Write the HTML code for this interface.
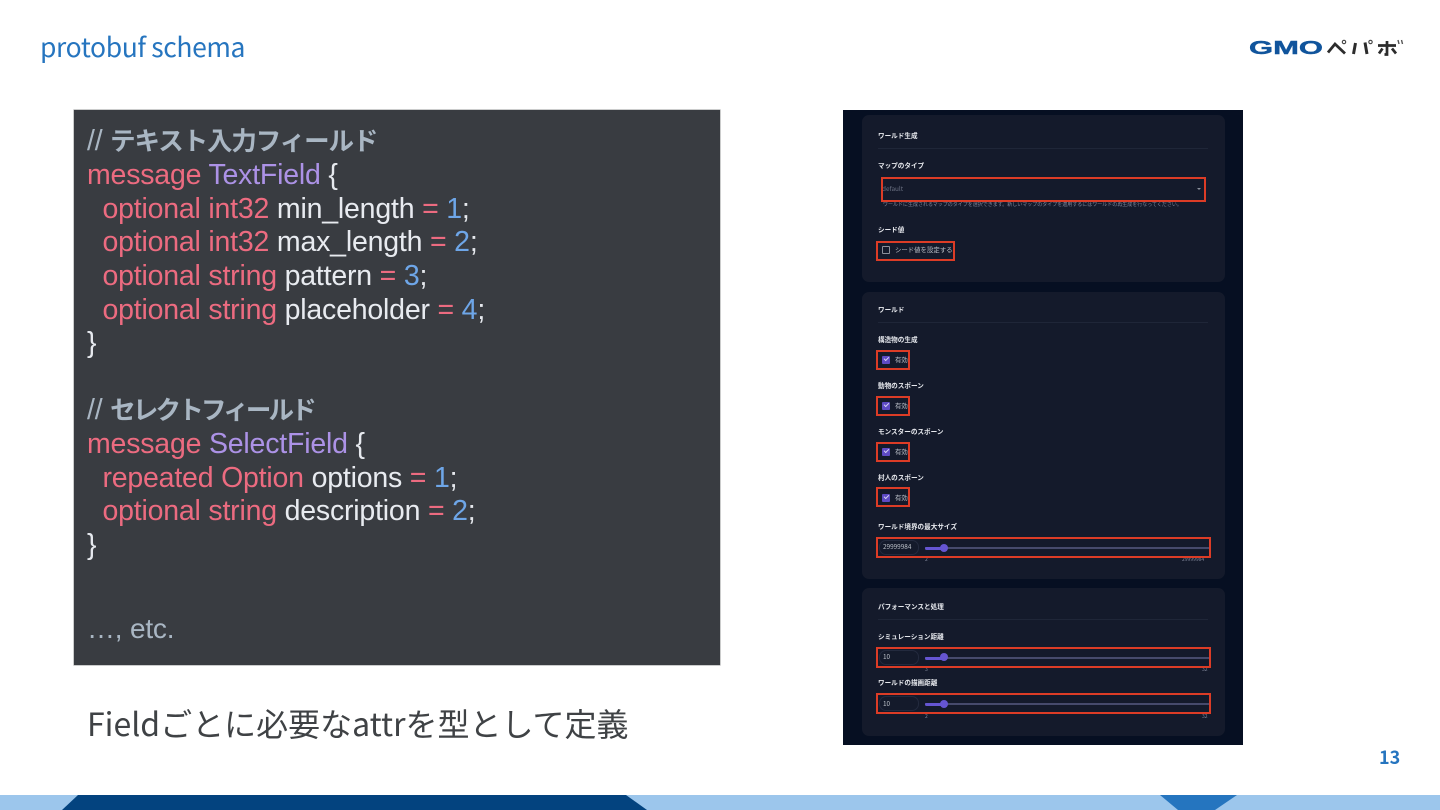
<!DOCTYPE html>
<html lang="ja"><head><meta charset="utf-8"><title>protobuf schema</title>
<style>
html,body{margin:0;padding:0;background:#fff}
body{width:1440px;height:810px;position:relative;overflow:hidden;font-family:"Liberation Sans","Noto Sans CJK JP",sans-serif}
.a{position:absolute}
.t{position:absolute;white-space:nowrap}
.jp{font-family:"Noto Sans CJK JP",sans-serif}
#code{left:74px;top:110px;width:646px;height:555px;background:#393c41;box-shadow:0 0 0 .6px #a8a9ab}
.l{position:absolute;left:13px;white-space:pre;font-size:28.5px;line-height:34px;height:34px;color:#e6e9ee;letter-spacing:-.2px}
.r{color:#ec6b80}.p{color:#ac92e6}.b{color:#6ea6e8}.w{color:#e8ebf0}
.c{color:#a9b6c3}.c b{font-weight:700;font-family:"Noto Sans CJK JP",sans-serif;font-size:25.5px;letter-spacing:-1.1px}
#shot{left:843px;top:110px;width:400px;height:635px;background:#060f22;overflow:hidden}
#in{position:absolute;left:0;top:0;width:400px;height:635px;filter:blur(.3px)}
.card{position:absolute;left:19px;width:363px;background:#141a2b;border-radius:7px}
.hr{position:absolute;left:35px;width:330px;height:1px;background:#1f2638}
.lb{position:absolute;left:35px;margin-top:-1px;font:700 6.6px/10px "Noto Sans CJK JP",sans-serif;color:#e6e8ed;white-space:nowrap}
.sm{position:absolute;font:400 6.4px/10px "Noto Sans CJK JP",sans-serif;color:#bcc0c8;white-space:nowrap}
.tiny{position:absolute;font:400 5px/8px "Noto Sans CJK JP",sans-serif;color:#80869a;white-space:nowrap}
.red{position:absolute;border:2px solid #dc3c26;box-sizing:border-box}
.cb{position:absolute;left:39px;width:8px;height:8px;background:#5d4ac4;border-radius:1px}
.cb:after{content:"";position:absolute;left:2px;top:1.2px;width:3.5px;height:2px;border-left:1px solid #d6d2f4;border-bottom:1px solid #d6d2f4;transform:rotate(-45deg)}
.tr{position:absolute;left:82px;width:284px;height:2px;background:#464a6c}
.fi{position:absolute;left:82px;width:19px;height:3px;margin-top:-.5px;background:#6555d2;border-radius:2px}
.th{position:absolute;left:97px;width:8px;height:8px;border-radius:50%;background:#6555d2}
.inp{position:absolute;left:36px;width:40px;height:15px;border:1px solid #232a3e;border-radius:7px;box-sizing:border-box}
</style></head><body>

<div class="t jp" style="left:40px;top:27px;font-size:26.5px;line-height:38px;color:#2675bf;letter-spacing:-.38px">protobuf schema</div>

<svg class="a" style="left:1245px;top:34px" width="162" height="26" viewBox="0 0 162 26">
<text x="4" y="20" font-family="Liberation Sans" font-weight="700" font-size="18.5" fill="#10549c" stroke="#10549c" stroke-width=".4" textLength="74" lengthAdjust="spacingAndGlyphs">GMO</text>
<path d="M83 18.5 L90 10 L100 19.5" fill="none" stroke="#2c2c2c" stroke-width="2.8"/>
<circle cx="99" cy="8" r="1.7" fill="none" stroke="#444" stroke-width="1.1"/>
<path d="M110.5 9 L108.5 20 M120 8.5 L122 20" fill="none" stroke="#2c2c2c" stroke-width="3"/>
<circle cx="125.5" cy="8" r="1.7" fill="none" stroke="#444" stroke-width="1.1"/>
<path d="M133 11.5 H151 M142 7 V20.5 L139.5 20.5 M137.5 14.5 L134 19.5 M147 14.5 L151 19.5" fill="none" stroke="#2c2c2c" stroke-width="2.7"/>
<path d="M153 6 L154 10 M156.5 6 L157.5 10" fill="none" stroke="#555" stroke-width="1.4"/>
</svg>

<div id="code" class="a">
<div class="l c" style="top:13px">// <b>テキスト入力フィールド</b></div>
<div class="l" style="top:48px"><span class="r">message</span> <span class="p">TextField</span> {</div>
<div class="l" style="top:82px">  <span class="r">optional int32</span> <span class="w">min_length</span> <span class="r">=</span> <span class="b">1</span>;</div>
<div class="l" style="top:115px">  <span class="r">optional int32</span> <span class="w">max_length</span> <span class="r">=</span> <span class="b">2</span>;</div>
<div class="l" style="top:149px">  <span class="r">optional string</span> <span class="w">pattern</span> <span class="r">=</span> <span class="b">3</span>;</div>
<div class="l" style="top:183px">  <span class="r">optional string</span> <span class="w">placeholder</span> <span class="r">=</span> <span class="b">4</span>;</div>
<div class="l" style="top:216px">}</div>
<div class="l c" style="top:282px">// <b style="letter-spacing:-2.8px">セレクトフィールド</b></div>
<div class="l" style="top:317px"><span class="r">message</span> <span class="p">SelectField</span> {</div>
<div class="l" style="top:351px">  <span class="r">repeated Option</span> <span class="w">options</span> <span class="r">=</span> <span class="b">1</span>;</div>
<div class="l" style="top:384px">  <span class="r">optional string</span> <span class="w">description</span> <span class="r">=</span> <span class="b">2</span>;</div>
<div class="l" style="top:418px">}</div>
<div class="l c" style="top:502px;font-size:28px">…, etc.</div>
</div>

<div class="t jp" style="left:87px;top:699px;font-size:32px;line-height:48px;color:#3f4245">Fieldごとに必要なattrを型として定義</div>

<div id="shot" class="a"><div id="in">
<div class="card" style="top:5px;height:167px"></div>
<div class="card" style="top:182px;height:287px"></div>
<div class="card" style="top:478px;height:148px"></div>

<div class="lb" style="top:21px">ワールド生成</div>
<div class="hr" style="top:38px"></div>
<div class="lb" style="top:51px">マップのタイプ</div>
<div class="sm" style="left:39px;top:74px;color:#6a7082">default</div>
<div class="t" style="left:354px;top:78px;width:0;height:0;border:2px solid transparent;border-top:2px solid #8a8f9c"></div>
<div class="tiny" style="left:40px;top:91px">ワールドに生成されるマップのタイプを選択できます。新しいマップのタイプを適用するにはワールドの再生成を行なってください。</div>
<div class="lb" style="top:115px">シード値</div>
<div class="a" style="left:39px;top:136px;width:8px;height:8px;border:1px solid #8b8f9a;box-sizing:border-box;border-radius:1px"></div>
<div class="sm" style="left:52px;top:135px">シード値を設定する</div>

<div class="lb" style="top:195px">ワールド</div>
<div class="hr" style="top:212px"></div>
<div class="lb" style="top:225px">構造物の生成</div>
<div class="cb" style="top:246px"></div><div class="sm" style="left:52px;top:245px">有効</div>
<div class="lb" style="top:271px">動物のスポーン</div>
<div class="cb" style="top:292px"></div><div class="sm" style="left:52px;top:291px">有効</div>
<div class="lb" style="top:317px">モンスターのスポーン</div>
<div class="cb" style="top:338px"></div><div class="sm" style="left:52px;top:337px">有効</div>
<div class="lb" style="top:363px">村人のスポーン</div>
<div class="cb" style="top:384px"></div><div class="sm" style="left:52px;top:383px">有効</div>
<div class="lb" style="top:412px">ワールド境界の最大サイズ</div>
<div class="inp" style="top:430px"></div>
<div class="sm" style="left:40px;top:432px">29999984</div>
<div class="tr" style="top:437px"></div><div class="fi" style="top:437px"></div><div class="th" style="top:434px"></div>
<div class="tiny" style="left:82px;top:446px">2</div><div class="tiny" style="left:339px;top:446px">29999984</div>

<div class="lb" style="top:492px">パフォーマンスと処理</div>
<div class="hr" style="top:509px"></div>
<div class="lb" style="top:522px">シミュレーション距離</div>
<div class="inp" style="top:540px"></div>
<div class="sm" style="left:40px;top:542px">10</div>
<div class="tr" style="top:547px"></div><div class="fi" style="top:547px"></div><div class="th" style="top:543px"></div>
<div class="tiny" style="left:82px;top:556px">3</div><div class="tiny" style="left:359px;top:556px">32</div>
<div class="lb" style="top:568px">ワールドの描画距離</div>
<div class="inp" style="top:586px"></div>
<div class="sm" style="left:40px;top:589px">10</div>
<div class="tr" style="top:593px"></div><div class="fi" style="top:593px"></div><div class="th" style="top:590px"></div>
<div class="tiny" style="left:82px;top:603px">2</div><div class="tiny" style="left:359px;top:603px">32</div>

<div class="red" style="left:38px;top:67px;width:325px;height:25px"></div>
<div class="red" style="left:33px;top:131px;width:79px;height:20px"></div>
<div class="red" style="left:33px;top:240px;width:34px;height:20px"></div>
<div class="red" style="left:33px;top:286px;width:34px;height:20px"></div>
<div class="red" style="left:33px;top:332px;width:34px;height:20px"></div>
<div class="red" style="left:33px;top:377px;width:34px;height:20px"></div>
<div class="red" style="left:33px;top:427px;width:335px;height:21px"></div>
<div class="red" style="left:33px;top:537px;width:335px;height:21px"></div>
<div class="red" style="left:33px;top:583px;width:335px;height:21px"></div>
</div></div>

<div class="t jp" style="left:1379px;top:744px;font-size:18px;line-height:26px;font-weight:700;color:#2675bf">13</div>

<svg class="a" style="left:0;top:795px" width="1440" height="15" viewBox="0 0 1440 15">
<rect width="1440" height="15" fill="#9cc6ec"/>
<polygon points="78,0 626,0 647,15 62,15" fill="#03437f"/>
<polygon points="1160,0 1237,0 1215,15 1178,15" fill="#2575bf"/>
</svg>
</body></html>
